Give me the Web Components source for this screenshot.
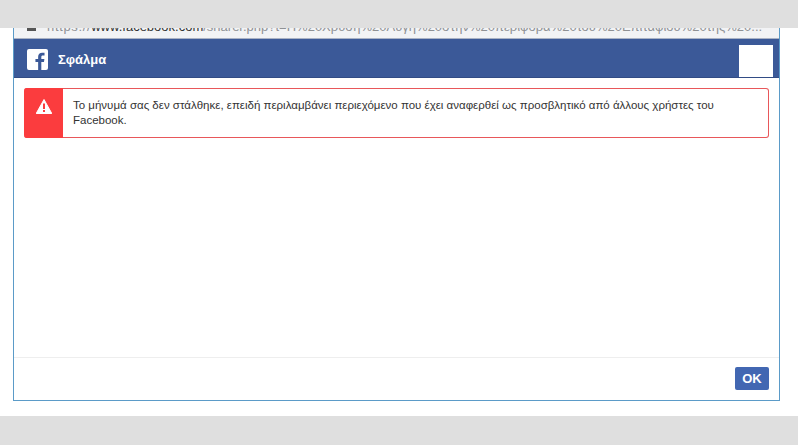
<!DOCTYPE html>
<html><head><meta charset="utf-8"><style>
html,body{margin:0;padding:0;background:#fff}
body{width:798px;height:445px;overflow:hidden;font-family:"Liberation Sans",Arial,sans-serif}
</style></head><body>
<page-frame>
  <fb-dialog title-text="Σφάλμα" url-host="www.facebook.com" url-rest="/sharer.php?t=Η%20Χρυση%20Αυγη%20στην%20περιφορα%20του%20Επιταφιου%20της%20...">
    <fb-alert>Το μήνυμά σας δεν στάλθηκε, επειδή περιλαμβάνει περιεχόμενο που έχει αναφερθεί ως προσβλητικό από άλλους χρήστες του Facebook.</fb-alert>
  </fb-dialog>
</page-frame>
<script>
function def(name,html,init){customElements.define(name,class extends HTMLElement{constructor(){super();this.attachShadow({mode:'open'}).innerHTML=html;}connectedCallback(){init&&init(this);}});}
def('page-frame',`<style>
:host{display:flex;flex-direction:column;height:445px}
.band{background:#dfdfdf;flex:none}
.top{height:28px}.bottom{height:29px}
.mid{flex:1;display:flex;padding:0 18px 15px 13px;min-height:0;background:#fff}
::slotted(*){flex:1}
</style><div class="band top"></div><div class="mid"><slot></slot></div><div class="band bottom"></div>`);
def('fb-dialog',`<style>
:host{display:flex;flex-direction:column;border:solid #5b9bc8;border-width:0 1px 1px 1px;background:#fff}
.url{flex:none;background:#f2f3f5;border-bottom:1px solid #a9b2c4;overflow:hidden;display:flex;align-items:flex-end;padding:0 0 3px 13px;box-sizing:content-box;height:7px;gap:11px;font-size:13px;line-height:16px;color:#8f9194;white-space:nowrap}
.lock{width:9px;height:3px;background:#555;align-self:flex-start;flex:none}
.scheme{letter-spacing:.65px}
.url b{font-weight:400;color:#333}
.head{height:39px;flex:none;background:#3b5998;border-bottom:1px solid #324c85;display:flex;align-items:center;padding:3px 6px 0 13px;box-sizing:border-box}
.head svg{width:21px;height:21px;flex:none}
.title{margin-left:10px;font-size:13px;font-weight:700;color:#fff;flex:1}
.close{width:34px;height:32px;background:#fff;flex:none;align-self:flex-end}
.body{flex:1;padding:10px 10px 0;min-height:0}
.foot{height:43px;flex:none;border-top:1px solid #eeeeee;display:flex;align-items:center;justify-content:flex-end;padding:0 10px 2px 0;box-sizing:border-box}
button{all:unset;width:34px;height:23px;background:#4267b2;border-radius:2px;color:#fff;font:700 13px/23px "Liberation Sans",Arial,sans-serif;text-align:center}
</style>
<div class="url"><span class="lock"></span><span><span class="scheme">https://</span><b id="h"></b><span id="r"></span></span></div>
<div class="head"><svg viewBox="0 0 22 22"><rect width="22" height="22" rx="2" fill="#fff"/><path d="M15 22v-8.300h2.800l.4-3.200H15V8.400c0-.95.270-1.600 1.630-1.600h1.720V3.950c-.3-.04-1.320-.13-2.500-.13-2.480 0-4.180 1.510-4.180 4.300v2.380H8.850v3.200h2.820V22z" fill="#3b5998"/></svg><span class="title" id="t"></span><span class="close"></span></div>
<div class="body"><slot></slot></div>
<div class="foot"><button>OK</button></div>`,el=>{const s=el.shadowRoot;s.getElementById('t').textContent=el.getAttribute('title-text');s.getElementById('h').textContent=el.getAttribute('url-host');s.getElementById('r').textContent=el.getAttribute('url-rest');});
def('fb-alert',`<style>
:host{display:flex;height:50px;border:1px solid #e8575a;border-left:0;border-radius:3px;box-sizing:border-box;background:#fff;font-size:11.5px;line-height:15px;color:#333}
.ic{width:39px;flex:none;background:#fb3c3e;border-radius:3px 0 0 3px;margin:-1px 0;display:flex;justify-content:center;padding-top:11px;box-sizing:border-box}
.ic svg{width:16px;height:15px}
.tx{padding:9px 40px 0 10px}
</style><div class="ic"><svg viewBox="0 0 16 15"><path d="M8 .5 15.800 14.500H.2z" fill="#fff" stroke="#fff" stroke-linejoin="round"/><rect x="7" y="4.500" width="2" height="5.500" fill="#fb3c3e"/><rect x="7" y="11" width="2" height="2" fill="#fb3c3e"/></svg></div><div class="tx"><slot></slot></div>`);
</script></body></html>
